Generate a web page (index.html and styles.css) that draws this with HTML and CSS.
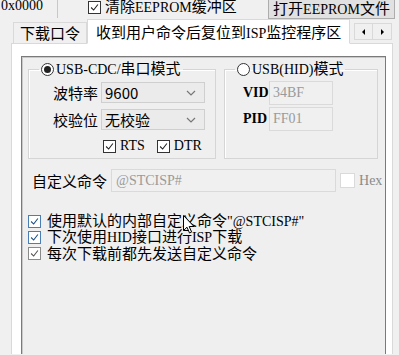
FILE: index.html
```html
<!DOCTYPE html>
<html lang="zh-CN">
<head>
    <meta charset="UTF-8">
    <title>STC-ISP</title>
    <link rel="stylesheet" href="styles.css">
</head>
<body>

    <!-- linha de cima (cortada) -->
    <div class="topbar">
        <div class="addr en">0x0000</div>
        <div class="check top-check">
            <span class="box"><svg viewBox="0 0 13 13"><polyline points="2.5,6.5 5.5,9.5 10.5,3"/></svg></span>
            <span>清除<span class="en">EEPROM</span>缓冲区</span>
        </div>
        <div class="btn">打开<span class="en">EEPROM</span>文件</div>
    </div>

    <!-- abas -->
    <div class="tabs">
        <div class="tab">下载口令</div>
        <div class="tab active">收到用户命令后复位到<span class="en">ISP</span>监控程序区</div>
        <div class="tab-arrows">
            <span><svg viewBox="0 0 6 8"><polygon points="4,1 1,4 4,7"/></svg></span>
            <span><svg viewBox="0 0 6 8"><polygon points="2,1 5,4 2,7"/></svg></span>
        </div>
    </div>

    <div class="page">
        <div class="frame">

            <div class="groups">
                <fieldset class="group group-cdc">
                    <legend><span class="radio on"></span><span><span class="en">USB-CDC/</span>串口模式</span></legend>
                    <div class="field">
                        <span class="lbl">波特率</span>
                        <div class="combo"><span>9600</span><svg viewBox="0 0 10 6"><polyline points="1,1 5,5 9,1"/></svg></div>
                    </div>
                    <div class="field">
                        <span class="lbl">校验位</span>
                        <div class="combo"><span>无校验</span><svg viewBox="0 0 10 6"><polyline points="1,1 5,5 9,1"/></svg></div>
                    </div>
                    <div class="flags">
                        <div class="check">
                            <span class="box"><svg viewBox="0 0 13 13"><polyline points="2.5,6.5 5.5,9.5 10.5,3"/></svg></span>
                            <span class="en">RTS</span>
                        </div>
                        <div class="check">
                            <span class="box"><svg viewBox="0 0 13 13"><polyline points="2.5,6.5 5.5,9.5 10.5,3"/></svg></span>
                            <span class="en">DTR</span>
                        </div>
                    </div>
                </fieldset>

                <fieldset class="group group-hid">
                    <legend><span class="radio"></span><span><span class="en">USB(HID)</span>模式</span></legend>
                    <div class="id-row">
                        <span class="id-lbl en">VID</span>
                        <div class="id-input en">34BF</div>
                    </div>
                    <div class="id-row">
                        <span class="id-lbl en">PID</span>
                        <div class="id-input en">FF01</div>
                    </div>
                </fieldset>
            </div>

            <div class="custom">
                <span class="custom-lbl">自定义命令</span>
                <div class="custom-input en">@STCISP#</div>
                <span class="hex-box"></span>
                <span class="hex en">Hex</span>
            </div>

            <div class="options">
                <div class="check opt blue">
                    <span class="box"><svg viewBox="0 0 13 13"><polyline points="2.5,6.5 5.5,9.5 10.5,3"/></svg></span>
                    <span>使用默认的内部自定义命令<span class="en">"@STCISP#"</span></span>
                </div>
                <div class="check opt blue">
                    <span class="box"><svg viewBox="0 0 13 13"><polyline points="2.5,6.5 5.5,9.5 10.5,3"/></svg></span>
                    <span>下次使用<span class="en">HID</span>接口进行<span class="en">ISP</span>下载</span>
                </div>
                <div class="check opt grey">
                    <span class="box"><svg viewBox="0 0 13 13"><polyline points="2.5,6.5 5.5,9.5 10.5,3"/></svg></span>
                    <span>每次下载前都先发送自定义命令</span>
                </div>
            </div>

        </div>
    </div>

    <!-- ponteiro do mouse -->
    <svg class="cursor" viewBox="0 0 12 19"><path d="M0.5,0.5 L0.5,15.5 L4,12.2 L6.5,18 L8.6,17.1 L6.2,11.5 L11,11.5 Z"/></svg>

</body>
</html>
```

FILE: styles.css
```css
/* base */
* {
    margin: 0;
    padding: 0;
    box-sizing: border-box;
}

body {
    font-family: "Noto Sans CJK SC", "Noto Sans", sans-serif;
    font-size: 15px;
    color: #000;
    background-color: #f0f0f0;
    width: 399px;
    height: 355px;
    overflow: hidden;
    position: relative;
}

.en {
    font-family: "Liberation Serif", serif;
    font-size: 14px;
}

/* linha de cima */
.topbar {
    display: flex;
    align-items: center;
    height: 24px;
    margin-top: -5px;
    white-space: nowrap;
}

.addr {
    width: 58px;
    height: 22px;
    line-height: 20px;
    padding-left: 1px;
    background-color: #f0f0f0;
    border-right: 1px solid #c8c8c8;
}

.top-check {
    margin-left: 30px;
}

.btn {
    margin-left: auto;
    margin-right: 4px;
    width: 127px;
    height: 23px;
    line-height: 21px;
    text-align: center;
    background-color: #e1e1e1;
    border: 1px solid #adadad;
}

/* checkbox */
.check {
    display: flex;
    align-items: center;
    gap: 4px;
    line-height: 16px;
    white-space: nowrap;
}

.box {
    width: 13px;
    height: 13px;
    flex: none;
    background-color: #fff;
    border: 1px solid #333;
    display: flex;
}

.box svg {
    width: 11px;
    height: 11px;
    fill: none;
    stroke: #222;
    stroke-width: 1.3;
}

/* abas */
.tabs {
    display: flex;
    align-items: flex-end;
    height: 24px;
    padding-left: 13px;
    white-space: nowrap;
}

.tab {
    height: 21px;
    line-height: 19px;
    padding: 0 6px;
    background-color: #f0f0f0;
    border: 1px solid #d9d9d9;
    border-bottom: none;
}

.tab.active {
    height: 25px;
    line-height: 23px;
    margin-bottom: -1px;
    padding: 0 8px;
    background-color: #fff;
    border-bottom: 1px solid #fff;
    position: relative;
    z-index: 1;
}

.tab-arrows {
    display: flex;
    margin-left: auto;
    margin-right: 7px;
    margin-bottom: 3px;
}

.tab-arrows span {
    width: 19px;
    height: 17px;
    display: flex;
    align-items: center;
    justify-content: center;
    background-color: #f0f0f0;
    border: 1px solid #d9d9d9;
}

.tab-arrows span + span {
    border-left: none;
}

.tab-arrows svg {
    width: 6px;
    height: 8px;
    fill: #000;
}

/* pagina da aba */
.page {
    margin: 0 6px 0 11px;
    height: 311px;
    padding: 12px 6px 0 9px;
    background-color: #fff;
    border: 1px solid #d9d9d9;
    border-bottom: none;
}

.frame {
    height: 298px;
    padding: 3px 7px 0 6px;
    background-color: #efefef;
    border: 1px solid #7a7a7a;
    border-bottom: none;
    box-shadow: inset 1px 1px 0 #c9c9c9;
}

.groups {
    display: flex;
    gap: 8px;
}

.group {
    margin: 0;
    min-inline-size: 0;
    padding: 0 10px 4px 10px;
    border: 1px solid #d5d5d5;
    box-shadow: inset 1px 1px 0 #fff;
}

.group legend {
    height: 18px;
    line-height: 18px;
    padding: 0 2px;
    display: flex;
    align-items: center;
    gap: 2px;
    white-space: nowrap;
}

.group-cdc {
    width: 188px;
}

.group-hid {
    width: 154px;
}

.radio {
    width: 13px;
    height: 13px;
    flex: none;
    border: 1px solid #333;
    border-radius: 50%;
    background-color: #fff;
    display: flex;
    align-items: center;
    justify-content: center;
}

.radio.on::after {
    content: "";
    width: 7px;
    height: 7px;
    border-radius: 50%;
    background-color: #222;
}

.field {
    display: flex;
    align-items: center;
    gap: 3px;
    margin-top: 4px;
    white-space: nowrap;
}

.field + .field {
    margin-top: 6px;
}

.lbl {
    width: 59px;
    text-align: right;
}

.combo {
    width: 104px;
    height: 21px;
    display: flex;
    align-items: center;
    justify-content: space-between;
    padding: 0 8px 0 3px;
    background-color: #ebebeb;
    border: 1px solid #cfcfcf;
}

.combo svg {
    width: 10px;
    height: 6px;
    fill: none;
    stroke: #777;
    stroke-width: 1.2;
}

.flags {
    display: flex;
    gap: 12px;
    margin: 8px 0 0 64px;
}

.id-row {
    display: flex;
    align-items: center;
    gap: 6px;
    padding-left: 8px;
    margin-top: 3px;
}

.id-row + .id-row {
    margin-top: 2px;
}

.id-lbl {
    width: 20px;
    font-weight: bold;
}

.id-input {
    width: 64px;
    height: 24px;
    line-height: 22px;
    padding-left: 3px;
    color: #9a9a9a;
    background-color: #f0f0f0;
    border: 1px solid #dadada;
}

/* comando */
.custom {
    display: flex;
    align-items: center;
    margin-top: 10px;
    padding-left: 4px;
    white-space: nowrap;
}

.custom-lbl {
    flex: none;
}

.custom-input {
    width: 225px;
    flex: none;
    height: 23px;
    line-height: 21px;
    margin-left: 4px;
    padding-left: 4px;
    color: #9a9a9a;
    background-color: #f0f0f0;
    border: 1px solid #dadada;
}

.hex-box {
    width: 15px;
    height: 15px;
    flex: none;
    margin-left: 4px;
    background-color: #fff;
    border: 1px solid #dadada;
}

.hex {
    margin-left: 4px;
    color: #8a8a8a;
}

.options {
    margin-top: 21px;
}

.opt {
    height: 16px;
    gap: 6px;
}

.opt.blue .box {
    border-color: #4a7fb5;
}

.opt.blue .box svg {
    stroke: #1d4f86;
}

.opt.grey .box {
    border-color: #8a8a8a;
}

.opt.grey .box svg {
    stroke: #555;
}

.cursor {
    position: absolute;
    left: 183px;
    top: 215px;
    width: 12px;
    height: 19px;
    fill: #fff;
    stroke: #000;
    stroke-width: 1;
}
```
